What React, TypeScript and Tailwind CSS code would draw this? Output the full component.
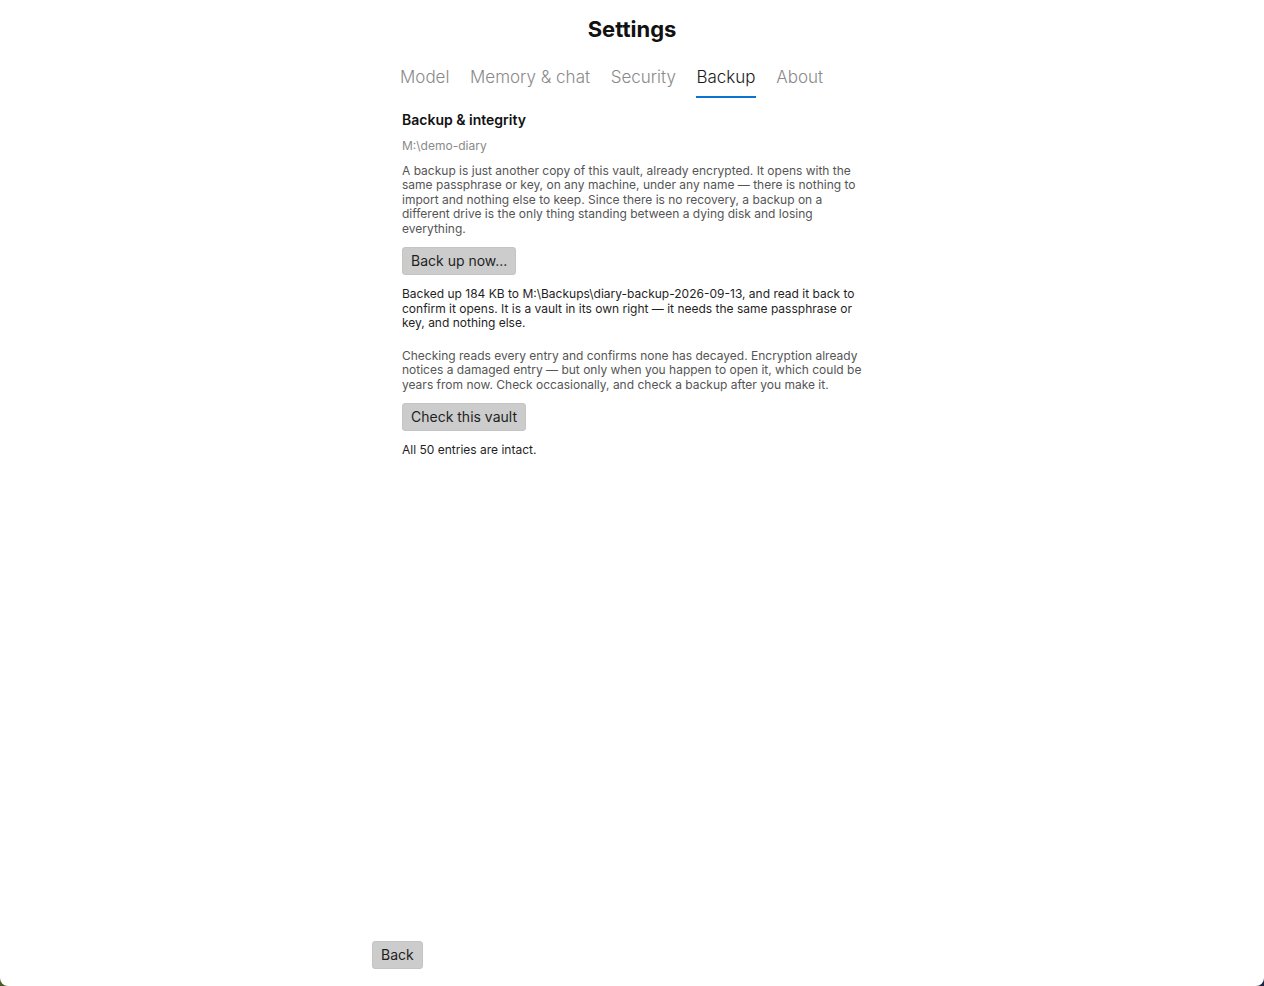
import React from 'react';

const tabs = ['Model', 'Memory & chat', 'Security', 'Backup', 'About'];

const Button = ({ children }: { children: React.ReactNode }) => (
  <button className="h-[28px] px-[8px] rounded-[3px] bg-[#cccccc] border border-[#c4c4c4] text-[14px] text-[#1f1f1f] leading-none self-start">
    {children}
  </button>
);

const App = () => {
  return (
    <div className="h-[986px] bg-gradient-to-r from-[#4b5a25] to-[#1c2a48] font-['Inter',sans-serif]">
      <div className="h-full bg-white rounded-b-[8px] overflow-hidden">
        <div className="w-[520px] h-full mx-auto flex flex-col">
          <h1 className="pt-[15px] text-center text-[22px] leading-[28px] font-bold text-[#111]">
            Settings
          </h1>

          <div className="mt-[23px] px-[28px] flex gap-[20.6px]">
            {tabs.map((t) => (
              <div
                key={t}
                className={
                  t === 'Backup'
                    ? 'pb-[8px] border-b-2 border-[#0a74d0] text-[17px] leading-[22px] font-light text-[#1a1a1a]'
                    : 'pb-[8px] border-b-2 border-transparent text-[17px] leading-[22px] font-light text-[#8a8a8a]'
                }
              >
                {t}
              </div>
            ))}
          </div>

          <div className="px-[30px] flex flex-col">
            <h2 className="mt-[13px] text-[14px] leading-[17px] font-semibold text-[#111]">
              Backup &amp; integrity
            </h2>
            <p className="mt-[11px] text-[12px] leading-[14.5px] text-[#8a8a8a]">M:\demo-diary</p>
            <p className="mt-[10px] text-[12px] leading-[14.5px] text-[#555]">
              A backup is just another copy of this vault, already encrypted. It opens with the same
              passphrase or key, on any machine, under any name — there is nothing to import and
              nothing else to keep. Since there is no recovery, a backup on a different drive is the
              only thing standing between a dying disk and losing everything.
            </p>
            <div className="mt-[11px] flex">
              <Button>Back up now...</Button>
            </div>
            <p className="mt-[12px] text-[12px] leading-[14.5px] text-[#1f1f1f]">
              Backed up 184 KB to M:\Backups\diary-backup-2026-09-13, and read it back to confirm it
              opens. It is a vault in its own right — it needs the same passphrase or key, and
              nothing else.
            </p>
            <p className="mt-[18px] text-[12px] leading-[14.5px] text-[#555]">
              Checking reads every entry and confirms none has decayed. Encryption already notices a
              damaged entry — but only when you happen to open it, which could be years from now.
              Check occasionally, and check a backup after you make it.
            </p>
            <div className="mt-[11px] flex">
              <Button>Check this vault</Button>
            </div>
            <p className="mt-[12px] text-[12px] leading-[14.5px] text-[#1f1f1f]">
              All 50 entries are intact.
            </p>
          </div>

          <div className="mt-auto pb-[17px] flex">
            <Button>Back</Button>
          </div>
        </div>
      </div>
    </div>
  );
};

export default App;
